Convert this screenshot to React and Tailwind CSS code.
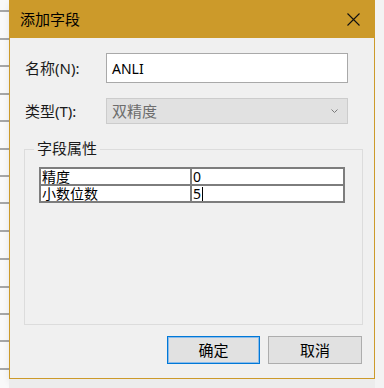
import React from "react";

const LINES = [10, 38, 65, 93, 120, 148, 175, 202, 230, 258, 286, 313, 340, 368];

const Field = ({ label, children }) => (
  <div className="flex items-center">
    <div className="w-[81px] text-[15px] leading-none text-[#1a1a1a]">{label}</div>
    {children}
  </div>
);

const App = () => {
  return (
    <div className="flex h-[388px] w-[384px] overflow-hidden bg-[#f6f6f6] font-['Noto_Sans','Noto_Sans_CJK_SC',sans-serif]">
      {/* sheet behind the dialog */}
      <div className="flex h-full w-[9px] flex-col bg-[#f9f9f9]">
        {LINES.map((y, i) => (
          <div
            key={y}
            className="h-[2px] w-full bg-[#a6a6a6]"
            style={{ marginTop: i === 0 ? y : y - LINES[i - 1] - 2 }}
          />
        ))}
      </div>

      <div className="flex flex-col">
        <div className="flex h-[379px] w-[366px] flex-col border border-t-0 border-[#cc9a2a] bg-[#f0f0f0] shadow-[2px_3px_8px_rgba(0,0,0,0.15)]">
          <div className="-mx-px flex h-[38px] items-center justify-between bg-[#cc9a2a] pl-[11px] pr-[15px]">
            <span className="text-[15px] text-black">添加字段</span>
            <svg width="13" height="13" viewBox="0 0 13 13" className="mt-[1px]">
              <path d="M0.5 0.5 L12.5 12.5 M12.5 0.5 L0.5 12.5" stroke="#111" strokeWidth="1.1" />
            </svg>
          </div>

          <div className="flex flex-1 flex-col pl-[15px] pr-[12px] pt-[15px]">
            <Field label="名称(N):">
              <div className="flex h-[30px] w-[242px] items-center border border-[#a9a9a9] bg-white pl-[5px] text-[14px] text-black">
                ANLI
              </div>
            </Field>

            <div className="mt-[15px]">
              <Field label="类型(T):">
                <div className="flex h-[26px] w-[242px] items-center justify-between border border-[#cccccc] bg-[#e1e1e1] pl-[5px] pr-[9px] text-[15px] text-[#6d6d6d]">
                  <span>双精度</span>
                  <svg width="7" height="4" viewBox="0 0 7 4">
                    <path d="M0.5 0.5 L3.5 3.5 L6.5 0.5" stroke="#7a7a7a" fill="none" strokeWidth="1" />
                  </svg>
                </div>
              </Field>
            </div>

            <div className="relative -ml-px mt-[25px] h-[176px] w-[339px] border border-[#dcdcdc]">
              <span className="absolute -top-[9px] left-[9px] bg-[#f0f0f0] px-[3px] text-[15px] leading-none text-[#1a1a1a]">
                字段属性
              </span>
              <div className="ml-[14px] mt-[17px] w-[306px] border-2 border-[#7d7d7d] bg-white text-[14px] leading-[15px] text-black">
                <div className="grid h-[17px] grid-cols-[151px_1fr] border-b-2 border-[#7d7d7d]">
                  <div className="flex items-center border-r-2 border-[#7d7d7d] pl-[1px]">精度</div>
                  <div className="flex items-center pl-[1px]">0</div>
                </div>
                <div className="grid h-[15px] grid-cols-[151px_1fr]">
                  <div className="flex items-center border-r-2 border-[#7d7d7d] pl-[1px]">小数位数</div>
                  <div className="flex items-center pl-[1px]">
                    5<span className="ml-px h-[14px] w-px bg-black" />
                  </div>
                </div>
              </div>
            </div>

            <div className="mt-[11px] flex justify-end gap-[8px]">
              <button className="h-[28px] w-[93px] border border-[#0078d7] bg-[#e1e1e1] text-[15px] text-black shadow-[inset_0_0_0_1px_#8cbcea]">
                确定
              </button>
              <button className="h-[28px] w-[94px] border border-[#adadad] bg-[#e1e1e1] text-[15px] text-black">
                取消
              </button>
            </div>
          </div>
        </div>
        <div className="flex-1 bg-[#ececec]" />
      </div>

      <div className="flex-1 bg-[#f3f3f3]" />
    </div>
  );
};

export default App;
